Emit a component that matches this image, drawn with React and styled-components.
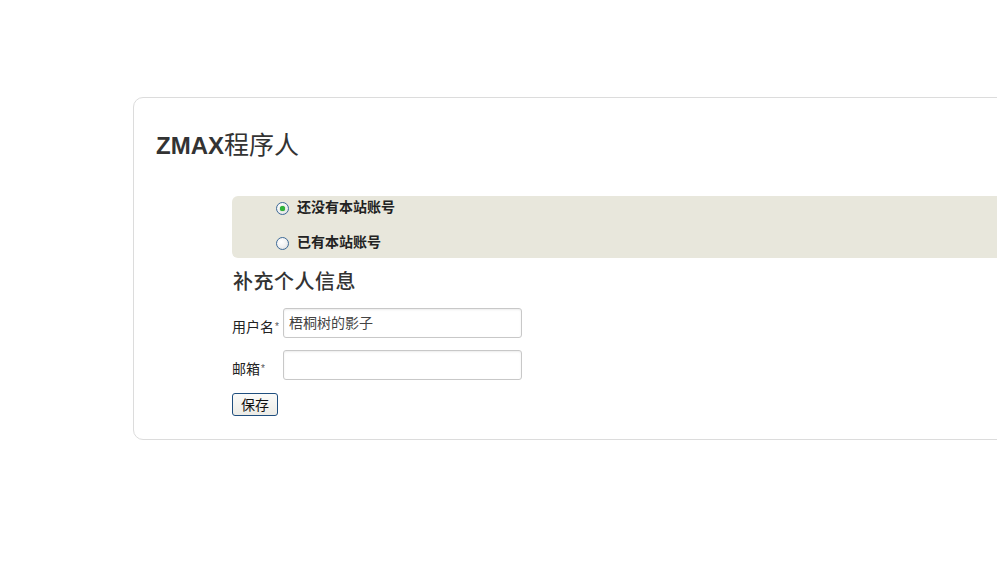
import React from "react";
import styled, { createGlobalStyle } from "styled-components";

const Global = createGlobalStyle`
  html, body {
    margin: 0;
    padding: 0;
    background: #fff;
    overflow: hidden;
  }
  body {
    font-family: "Liberation Sans", "Noto Sans CJK SC", sans-serif;
    color: #333;
  }
`;

const Page = styled.div`
  width: 997px;
  height: 567px;
  padding-top: 97px;
  padding-left: 133px;
  box-sizing: border-box;
  overflow: hidden;
`;

const Card = styled.div`
  width: 1000px;
  border: 1px solid #dcdcdc;
  border-radius: 10px;
  padding: 0 0 23px 22px;
  box-sizing: border-box;
`;

const Title = styled.h1`
  margin: 32px 0 0 0;
  font-size: 24px;
  line-height: 30px;
  font-weight: bold;
  color: #333;
  letter-spacing: 0;
`;

const TitleCjk = styled.span`
  font-weight: normal;
  font-size: 25px;
`;

const FormArea = styled.div`
  margin-left: 76px;
  margin-top: 35px;
`;

const ChoiceBox = styled.div`
  background: #e8e7dc;
  border-radius: 6px 0 0 6px;
  padding: 0 0 3px 44px;
  display: flex;
  flex-direction: column;
  gap: 11px;
`;

const ChoiceRow = styled.label`
  display: flex;
  align-items: center;
  height: 24px;
  gap: 8px;
  font-size: 14px;
  font-weight: bold;
  color: #222;
`;

const ChoiceText = styled.span`
  line-height: 20px;
  margin-bottom: 3px;
`;

const Radio = styled.span`
  width: 11px;
  height: 11px;
  border-radius: 50%;
  border: 1px solid #3d6a98;
  background: radial-gradient(circle at 40% 35%, #ffffff 0%, #f2f2f2 50%, #d4d6d8 100%);
  display: flex;
  align-items: center;
  justify-content: center;
  flex: none;
  &::after {
    content: "";
    width: 5px;
    height: 5px;
    border-radius: 50%;
    background: ${(p) => (p.$checked ? "#2fb53a" : "transparent")};
    box-shadow: ${(p) => (p.$checked ? "0 0 1px #1a7d22" : "none")};
  }
`;

const SectionTitle = styled.h2`
  margin: 11px 0 0 1px;
  font-size: 20px;
  line-height: 26px;
  font-weight: 500;
  color: #333;
  letter-spacing: 0.5px;
`;

const Fields = styled.div`
  margin-top: 13px;
  display: flex;
  flex-direction: column;
  gap: 12px;
`;

const FieldRow = styled.div`
  display: flex;
  align-items: flex-end;
`;

const Label = styled.span`
  width: 51px;
  flex: none;
  font-size: 14px;
  line-height: 17px;
  padding-bottom: 2px;
  color: #222;
`;

const Star = styled.span`
  font-size: 10px;
  color: #555;
  vertical-align: 2px;
  margin-left: 1px;
`;

const Input = styled.input`
  width: 239px;
  height: 30px;
  box-sizing: border-box;
  border: 1px solid #c8c8c8;
  border-radius: 3px;
  box-shadow: inset 0 1px 2px rgba(0, 0, 0, 0.08);
  padding: 0 5px 3px 5px;
  font-family: "Liberation Sans", "Noto Sans CJK SC", sans-serif;
  font-size: 14px;
  color: #444;
  outline: none;
  background: #fff;
`;

const SaveButton = styled.button`
  margin-top: 13px;
  width: 46px;
  height: 23px;
  box-sizing: border-box;
  padding: 0;
  border: 1px solid #1f4e7e;
  border-radius: 3px;
  background: linear-gradient(#fbfbf9, #ecebe6);
  font-family: "Liberation Sans", "Noto Sans CJK SC", sans-serif;
  font-size: 14px;
  line-height: 20px;
  color: #111;
  display: block;
`;

export default function App() {
  return (
    <>
      <Global />
      <Page>
        <Card>
          <Title>
            ZMAX<TitleCjk>程序人</TitleCjk>
          </Title>
          <FormArea>
            <ChoiceBox>
              <ChoiceRow>
                <Radio $checked />
                <ChoiceText>还没有本站账号</ChoiceText>
              </ChoiceRow>
              <ChoiceRow>
                <Radio />
                <ChoiceText>已有本站账号</ChoiceText>
              </ChoiceRow>
            </ChoiceBox>
            <SectionTitle>补充个人信息</SectionTitle>
            <Fields>
              <FieldRow>
                <Label>
                  用户名<Star>*</Star>
                </Label>
                <Input defaultValue="梧桐树的影子" />
              </FieldRow>
              <FieldRow>
                <Label>
                  邮箱<Star>*</Star>
                </Label>
                <Input defaultValue="" />
              </FieldRow>
            </Fields>
            <SaveButton>保存</SaveButton>
          </FormArea>
        </Card>
      </Page>
    </>
  );
}
